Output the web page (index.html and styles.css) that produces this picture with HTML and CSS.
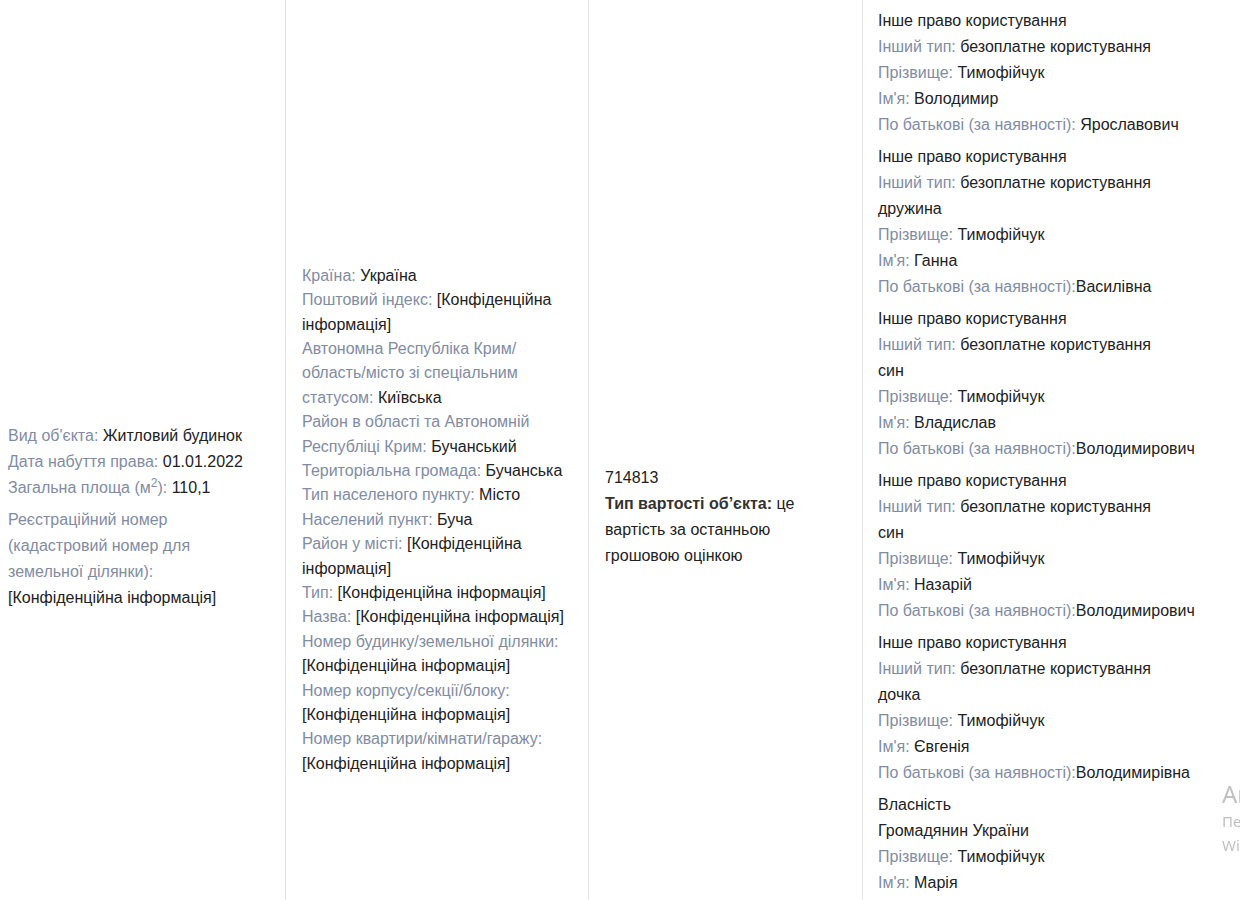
FILE: index.html
```html
<!DOCTYPE html>
<html lang="uk">
<head>
<meta charset="utf-8">
<title>Об'єкти нерухомості</title>
<link rel="stylesheet" href="styles.css">
</head>
<body>
<div class="wrap">
<table class="decl">
  <tr class="row">
    <td class="cell c1">
      <div class="grp">
        <div><span class="lbl">Вид об'єкта:</span> Житловий будинок</div>
        <div><span class="lbl">Дата набуття права:</span> 01.01.2022</div>
        <div><span class="lbl">Загальна площа (м<sup>2</sup>):</span> 110,1</div>
      </div>
      <div class="grp">
        <span class="lbl">Реєстраційний номер (кадастровий номер для земельної ділянки):</span> [Конфіденційна інформація]
      </div>
    </td>
    <td class="cell c2">
      <div><span class="lbl">Країна:</span> Україна</div>
      <div><span class="lbl">Поштовий індекс:</span> [Конфіденційна інформація]</div>
      <div><span class="lbl">Автономна Республіка Крим/<wbr>область/місто зі спеціальним статусом:</span> Київська</div>
      <div><span class="lbl">Район в області та Автономній Республіці Крим:</span> Бучанський</div>
      <div><span class="lbl">Територіальна громада:</span> Бучанська</div>
      <div><span class="lbl">Тип населеного пункту:</span> Місто</div>
      <div><span class="lbl">Населений пункт:</span> Буча</div>
      <div><span class="lbl">Район у місті:</span> [Конфіденційна інформація]</div>
      <div><span class="lbl">Тип:</span> [Конфіденційна інформація]</div>
      <div><span class="lbl">Назва:</span> [Конфіденційна інформація]</div>
      <div><span class="lbl">Номер будинку/земельної ділянки:</span> [Конфіденційна інформація]</div>
      <div><span class="lbl">Номер корпусу/секції/блоку:</span> [Конфіденційна інформація]</div>
      <div><span class="lbl">Номер квартири/кімнати/гаражу:</span> [Конфіденційна інформація]</div>
    </td>
    <td class="cell c3">
      <div>714813</div>
      <div><b>Тип вартості об’єкта:</b> це вартість за останньою грошовою оцінкою</div>
    </td>
    <td class="cell c4">
      <div class="grp">
        <div>Інше право користування</div>
        <div><span class="lbl">Інший тип:</span> безоплатне користування</div>
        <div><span class="lbl">Прізвище:</span> Тимофійчук</div>
        <div><span class="lbl">Ім'я:</span> Володимир</div>
        <div><span class="lbl">По батькові (за наявності):</span> Ярославович</div>
      </div>
      <div class="grp">
        <div>Інше право користування</div>
        <div><span class="lbl">Інший тип:</span> безоплатне користування</div>
        <div>дружина</div>
        <div><span class="lbl">Прізвище:</span> Тимофійчук</div>
        <div><span class="lbl">Ім'я:</span> Ганна</div>
        <div><span class="lbl">По батькові (за наявності):</span>Василівна</div>
      </div>
      <div class="grp">
        <div>Інше право користування</div>
        <div><span class="lbl">Інший тип:</span> безоплатне користування</div>
        <div>син</div>
        <div><span class="lbl">Прізвище:</span> Тимофійчук</div>
        <div><span class="lbl">Ім'я:</span> Владислав</div>
        <div><span class="lbl">По батькові (за наявності):</span>Володимирович</div>
      </div>
      <div class="grp">
        <div>Інше право користування</div>
        <div><span class="lbl">Інший тип:</span> безоплатне користування</div>
        <div>син</div>
        <div><span class="lbl">Прізвище:</span> Тимофійчук</div>
        <div><span class="lbl">Ім'я:</span> Назарій</div>
        <div><span class="lbl">По батькові (за наявності):</span>Володимирович</div>
      </div>
      <div class="grp">
        <div>Інше право користування</div>
        <div><span class="lbl">Інший тип:</span> безоплатне користування</div>
        <div>дочка</div>
        <div><span class="lbl">Прізвище:</span> Тимофійчук</div>
        <div><span class="lbl">Ім'я:</span> Євгенія</div>
        <div><span class="lbl">По батькові (за наявності):</span>Володимирівна</div>
      </div>
      <div class="grp">
        <div>Власність</div>
        <div>Громадянин України</div>
        <div><span class="lbl">Прізвище:</span> Тимофійчук</div>
        <div><span class="lbl">Ім'я:</span> Марія</div>
        <div><span class="lbl">По батькові (за наявності):</span>Володимирівна</div>
      </div>
    </td>
  </tr>
</table>
</div>
<div class="watermark">
  <div class="wm-title">Активація Windows</div>
  <div class="wm-text">Перейдіть до розділу "Настройки", щоб активувати</div>
  <div class="wm-text">Windows.</div>
</div>
</body>
</html>
```

FILE: styles.css
```css
html, body {
  margin: 0;
  padding: 0;
  background: #fff;
  overflow: hidden;
}

body {
  font-family: "Liberation Sans", Arial, sans-serif;
  font-size: 16px;
  color: #222;
}

.wrap {
  width: 1240px;
  height: 900px;
  overflow: hidden;
}

.decl {
  border-collapse: separate;
  border-spacing: 0;
  table-layout: fixed;
  width: 1263px;
}

.row {
  height: 1034px;
}

.cell {
  box-sizing: border-box;
  vertical-align: middle;
  line-height: 26px;
  border-right: 1px solid #e4e4e4;
}

.c1 {
  width: 286px;
  padding: 0 28px 0 8px;
}

.c2 {
  width: 303px;
  padding: 6px 14px 0 16px;
  line-height: 24.4px;
}

.c3 {
  width: 274px;
  padding: 0 16px;
}

.c4 {
  width: 400px;
  padding: 8px 16px 0 15px;
  vertical-align: top;
}

.grp + .grp {
  margin-top: 6px;
}

.c4 .grp + .grp {
  margin-top: 6px;
}

.c4 .grp:first-child {
  margin-bottom: 1px;
}

.lbl {
  color: #818ca3;
}

sup {
  font-size: 12px;
  line-height: 0;
}

b {
  color: #333;
}

.watermark {
  position: fixed;
  left: 1222px;
  top: 779px;
  color: rgba(140, 140, 140, 0.55);
  font-family: "Noto Sans", "Liberation Sans", sans-serif;
  white-space: nowrap;
}

.wm-title {
  font-size: 24px;
  line-height: 30px;
}

.wm-text {
  font-size: 15px;
  line-height: 24px;
}
```
